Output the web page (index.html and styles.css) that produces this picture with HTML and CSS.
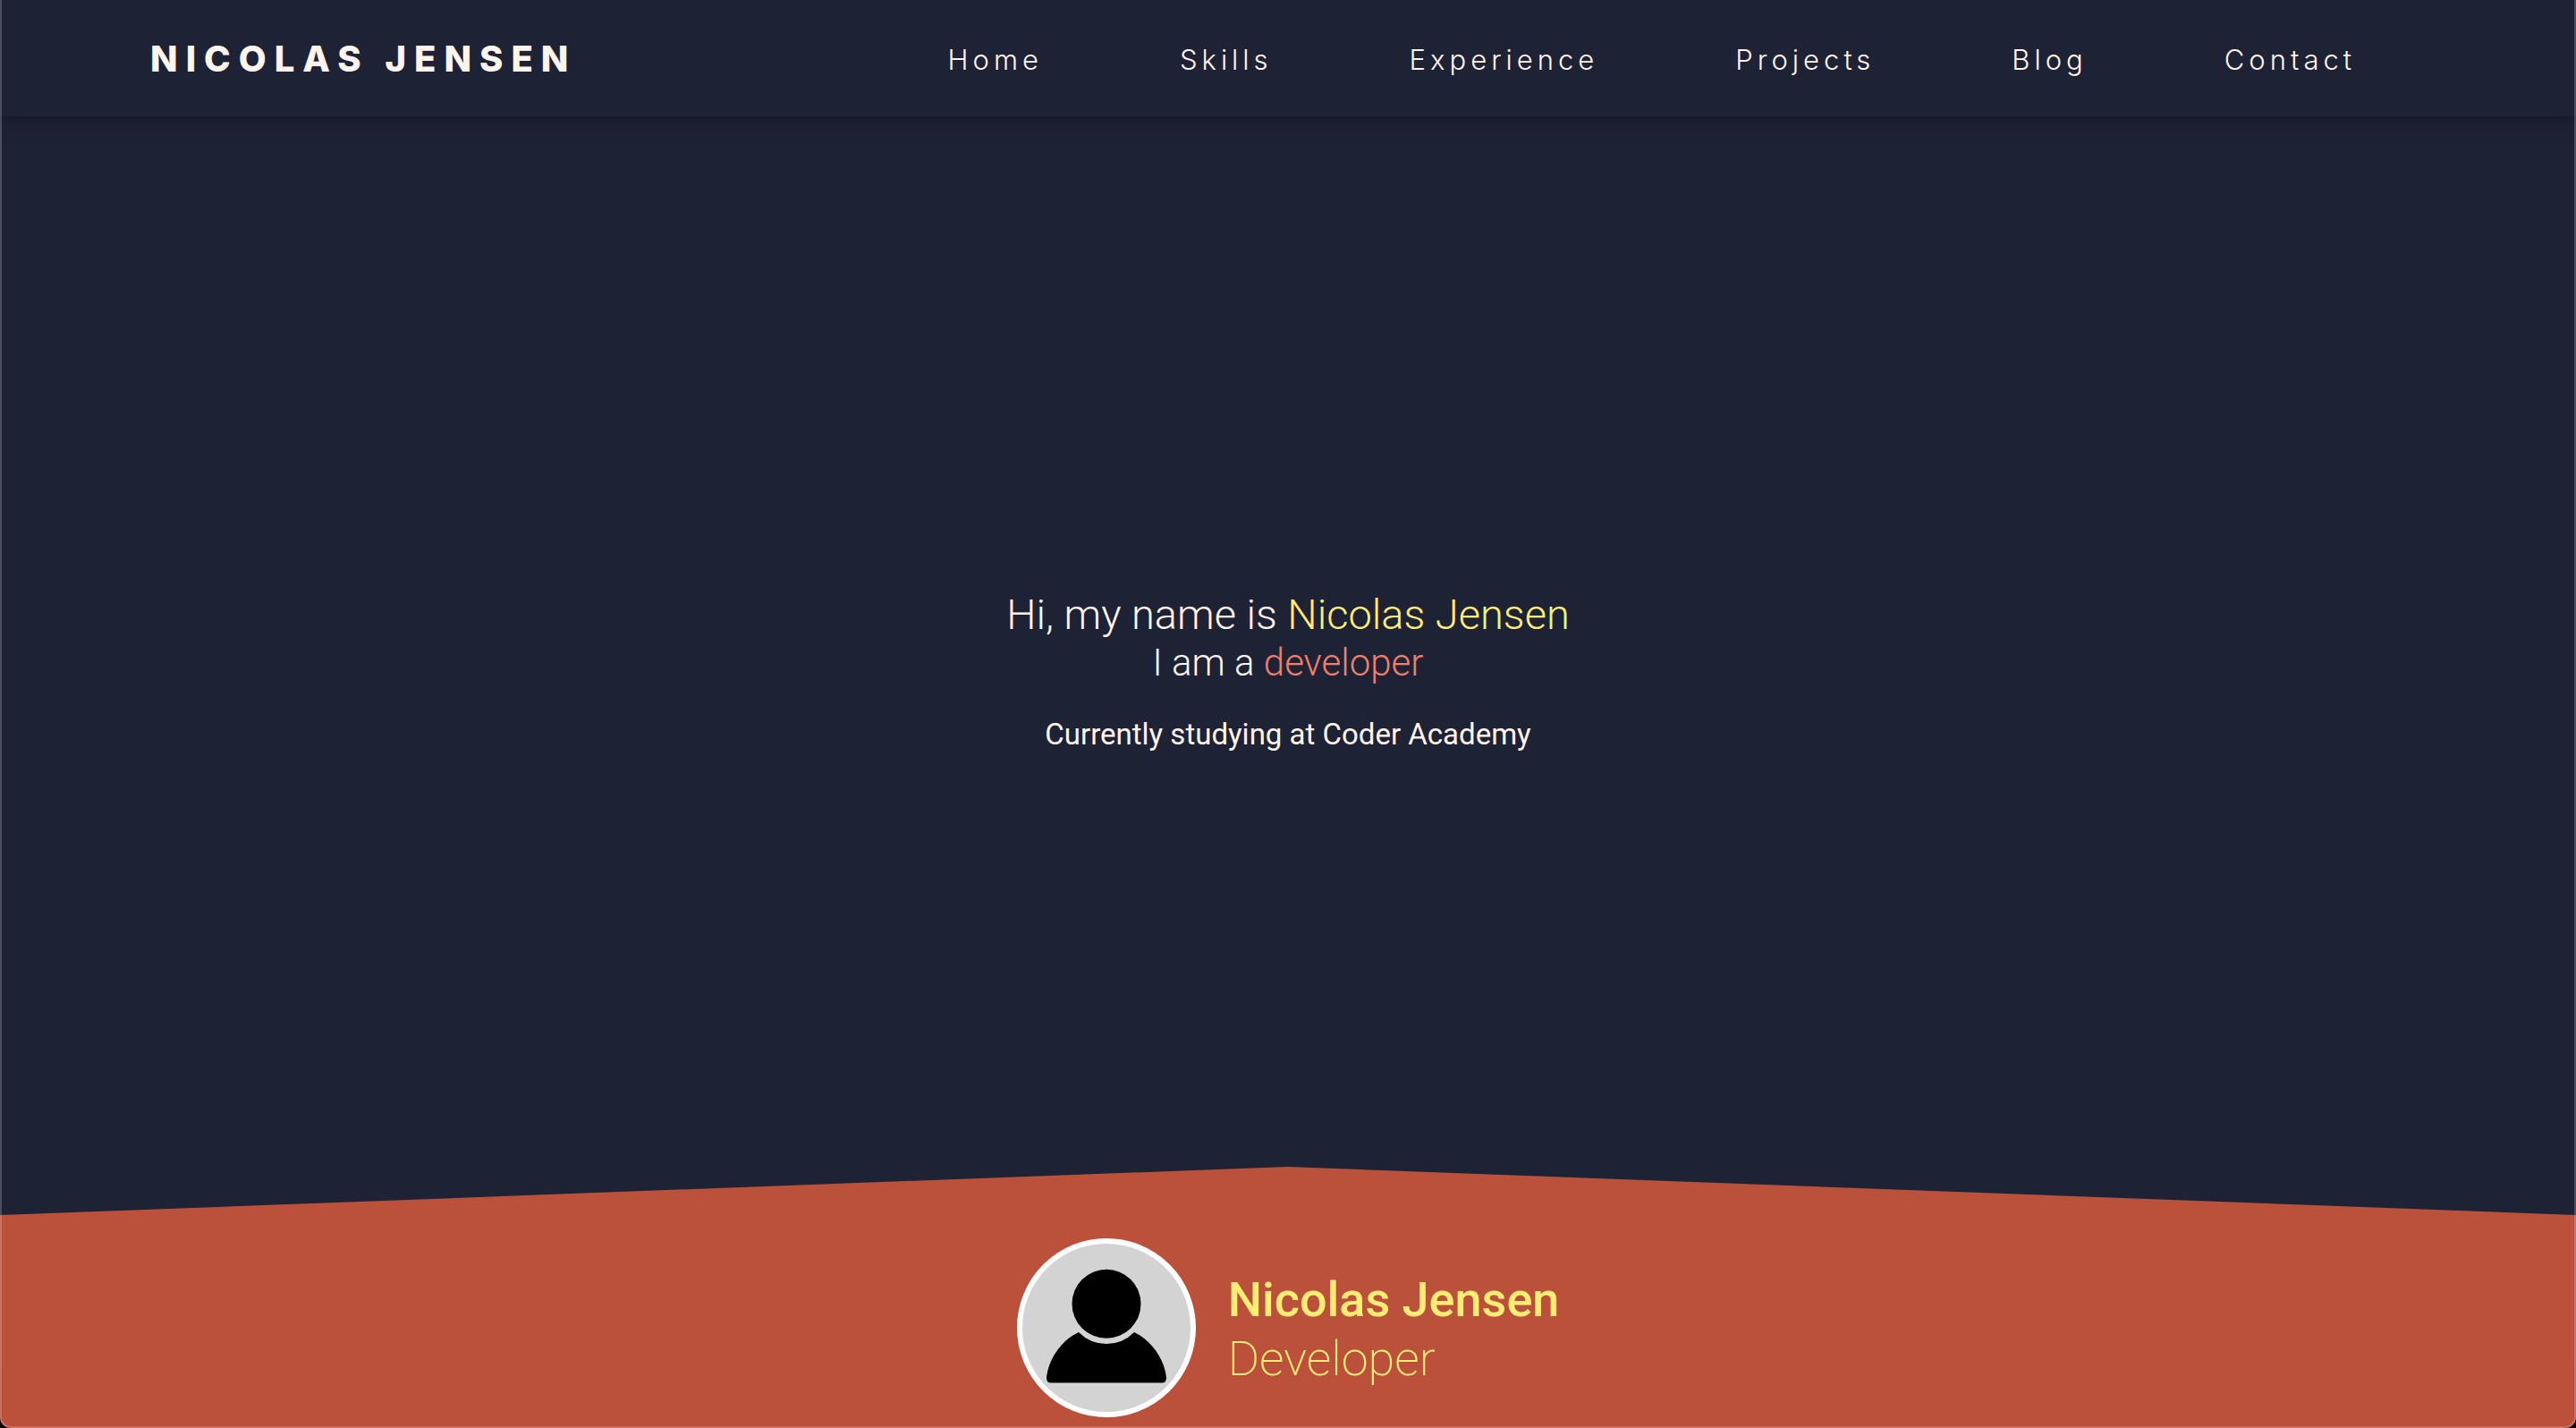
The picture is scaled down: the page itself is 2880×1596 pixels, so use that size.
FILE: index.html
```html
<!DOCTYPE html>
<html lang="en">
<head>
<meta charset="utf-8">
<meta name="viewport" content="width=device-width, initial-scale=1">
<title>Nicolas Jensen</title>
<link rel="stylesheet" href="styles.css">
</head>
<body>
<div class="page">
  <header class="site-header">
    <a class="brand" href="#">NICOLAS JENSEN</a>
    <nav class="site-nav" aria-label="Main">
      <a href="#">Home</a>
      <a href="#">Skills</a>
      <a href="#">Experience</a>
      <a href="#">Projects</a>
      <a href="#">Blog</a>
      <a href="#">Contact</a>
    </nav>
  </header>
  <main class="hero">
    <h1>Hi, my name is <span class="name">Nicolas Jensen</span></h1>
    <h2>I am a <span class="role">developer</span></h2>
    <p>Currently studying at Coder Academy</p>
  </main>
  <footer class="site-footer">
    <svg class="avatar" viewBox="0 0 200 200" aria-hidden="true">
      <circle cx="100" cy="100" r="97" fill="#d3d3d3" stroke="#fff" stroke-width="6"/>
      <circle cx="100" cy="73.300" r="38.500"/>
      <path d="M69 105C51 113 35 134 33 156Q33 161.500 38 161.500H162Q167 161.500 167 156C165 134 149 113 131 105Q118 118 100 118T69 105Z"/>
    </svg>
    <div class="profile">
      <strong>Nicolas Jensen</strong>
      <span>Developer</span>
    </div>
  </footer>
</div>
</body>
</html>
```
FILE: styles.css
```css
* {
  box-sizing: border-box;
}

body {
  margin: 0;
  background: #000;
  color: #fff5ee;
  font-family: Roboto, "Liberation Sans", sans-serif;
}

a {
  color: inherit;
  text-decoration: none;
}

.page {
  position: relative;
  display: flex;
  flex-direction: column;
  min-height: 100vh;
  overflow: hidden;
  border-radius: 0 0 12px 12px;
  background: #1e2235;
}

/* translucent window edge */
.page::after {
  content: "";
  position: absolute;
  inset: 0;
  border: solid rgba(255, 255, 255, 0.2);
  border-width: 0 2px 2px;
  border-radius: inherit;
  pointer-events: none;
}

.site-header {
  display: flex;
  align-items: center;
  justify-content: space-between;
  height: 130px;
  padding: 0 246px 0 168px;
  box-shadow: 0 0 20px rgba(0, 0, 0, 0.5);
  font-family: Inter, "Liberation Sans", sans-serif;
}

.brand {
  font-size: 40px;
  font-weight: 800;
  letter-spacing: 9px;
}

.site-nav {
  display: flex;
  gap: 153px;
  padding-top: 2px;
  font-size: 31px;
  font-weight: 300;
  letter-spacing: 5px;
}

.hero {
  flex: 1;
  display: flex;
  flex-direction: column;
  align-items: center;
  justify-content: center;
  padding-top: 98px;
  text-align: center;
}

.hero h1,
.hero h2 {
  margin: 0;
  font-weight: 300;
}

.hero h1 {
  font-size: 47px;
  line-height: 56px;
}

.hero h2 {
  font-size: 42px;
  line-height: 52px;
}

.hero p {
  margin: 34px 0 32px;
  font-size: 33px;
  line-height: 40px;
}

.name {
  color: #ffed75;
}

.role {
  color: #f07f69;
}

.site-footer {
  display: flex;
  align-items: flex-end;
  justify-content: center;
  gap: 36px;
  height: 292px;
  padding-bottom: 12px;
  background: #bb513a;
  clip-path: polygon(0 54px, 50% 0, 100% 54px, 100% 100%, 0 100%);
}

.avatar {
  width: 200px;
  height: 200px;
}

.profile {
  display: flex;
  flex-direction: column;
  padding-bottom: 32px;
  color: #ffed75;
  font-size: 54px;
  line-height: 66px;
}

.profile strong {
  font-weight: 500;
}

.profile span {
  font-weight: 200;
}
```
